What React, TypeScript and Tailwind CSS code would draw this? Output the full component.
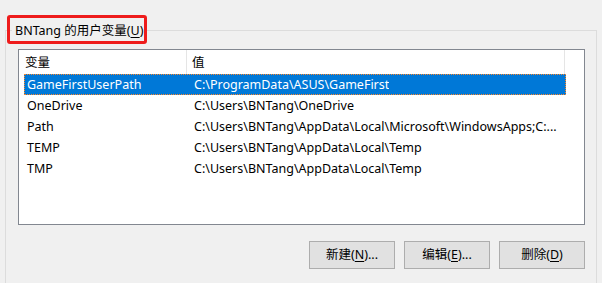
import React from 'react';

const rows = [
  { name: 'GameFirstUserPath', value: 'C:\\ProgramData\\ASUS\\GameFirst' },
  { name: 'OneDrive', value: 'C:\\Users\\BNTang\\OneDrive' },
  { name: 'Path', value: 'C:\\Users\\BNTang\\AppData\\Local\\Microsoft\\WindowsApps;C:...' },
  { name: 'TEMP', value: 'C:\\Users\\BNTang\\AppData\\Local\\Temp' },
  { name: 'TMP', value: 'C:\\Users\\BNTang\\AppData\\Local\\Temp' },
];

function WinButton({ label, hotkey, suffix }: { label: string; hotkey: string; suffix?: string }) {
  return (
    <button className="flex h-[28px] w-[86px] items-center justify-center border border-[#adadad] bg-[#e1e1e1] pt-[1px] text-[12.5px] text-black">
      {label}(<span className="underline underline-offset-2">{hotkey}</span>){suffix}
    </button>
  );
}

export default function App() {
  return (
    <div
      className="relative h-[283px] w-[602px] overflow-hidden bg-[#f0f0f0] pl-[5px] pt-[30px] text-[12.5px] text-black"
      style={{ fontFamily: '"Noto Sans", "Noto Sans CJK SC", sans-serif' }}
    >
      <div className="relative h-[300px] w-[592px] border border-[#dcdcdc] pl-[12px] pt-[18px]">
        {/* group label */}
        <div className="absolute left-[6px] top-[-9px] bg-[#f0f0f0] px-[3px] leading-[18px]">
          BNTang 的用户变量(<span className="underline underline-offset-2">U</span>)
        </div>
        {/* red annotation box */}
        <div className="absolute left-[1px] top-[-16px] h-[29px] w-[140px] rounded-[3px] border-[3px] border-[#ee1c1c]" />

        {/* list view */}
        <div className="h-[176px] w-[567px] border border-[#828790] bg-white">
          <div className="flex h-[24px] items-center">
            <div className="flex h-full w-[168px] items-center border-r border-[#e5e5e5] pl-[6px] pt-[2px]">变量</div>
            <div className="flex h-full w-[378px] items-center border-r border-[#e5e5e5] pl-[5px] pt-[2px]">值</div>
          </div>
          <div className="pl-[5px]">
            {rows.map((r, i) => (
              <div
                key={r.name}
                className={
                  i === 0
                    ? 'flex h-[21px] w-[542px] items-center whitespace-nowrap border border-dotted border-[#ff8728] bg-[#0078d7] pt-[1px] text-white'
                    : 'flex h-[21px] w-[542px] items-center whitespace-nowrap border border-transparent pt-[1px]'
                }
              >
                <div className="w-[169px] pl-[2px]">{r.name}</div>
                <div className="overflow-hidden">{r.value}</div>
              </div>
            ))}
          </div>
        </div>

        <div className="mt-[16px] flex w-[567px] justify-end gap-[9px]">
          <WinButton label="新建" hotkey="N" suffix="..." />
          <WinButton label="编辑" hotkey="E" suffix="..." />
          <WinButton label="删除" hotkey="D" />
        </div>
      </div>
    </div>
  );
}
